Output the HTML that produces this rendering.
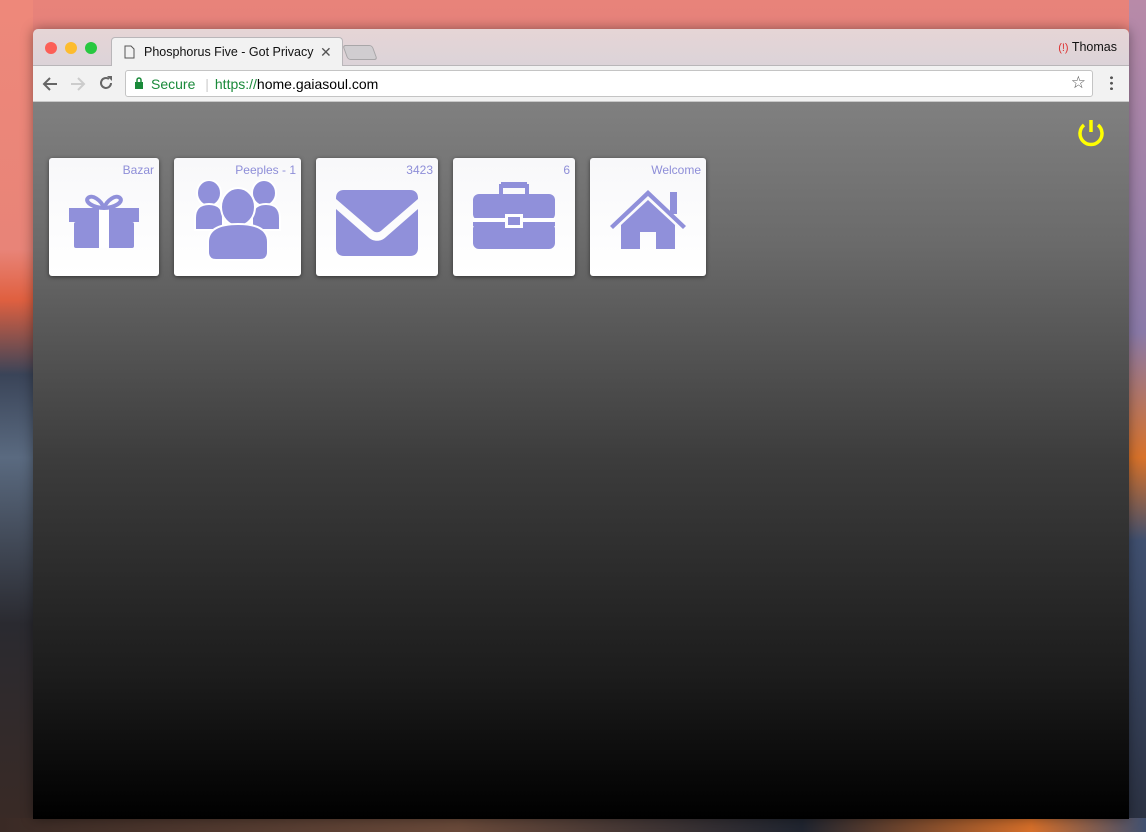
<!DOCTYPE html>
<html><head><style>
*{margin:0;padding:0;box-sizing:border-box}
body{width:1146px;height:832px;overflow:hidden;position:relative;font-family:"Liberation Sans",sans-serif;
background:linear-gradient(180deg,#e8837a 0%,#d97a80 25%,#b0506a 35%,#3a3f55 55%,#2a2a35 80%,#3a2a28 100%);}
.deskr{position:absolute;right:0;top:0;width:17px;height:832px;background:linear-gradient(180deg,#b88aa8 0%,#8a7aa8 40%,#d8722a 55%,#405070 65%,#2a3040 100%)}
.deskl{position:absolute;left:0;top:0;width:33px;height:832px;background:linear-gradient(180deg,#ee887a 0%,#e88478 30%,#e06040 36%,#3a4458 45%,#5a6a80 55%,#2a2a30 75%,#3a2a25 100%)}
.deskb{position:absolute;left:0;bottom:0;width:1146px;height:14px;background:linear-gradient(90deg,#3a2a25,#6a4a3a 40%,#202530 70%,#d8702a 90%,#405070)}
.win{position:absolute;left:33px;top:29px;width:1096px;height:790px;border-radius:5px 5px 0 0;overflow:hidden;box-shadow:0 0 12px rgba(0,0,0,.4)}
.tabbar{height:37px;background:linear-gradient(180deg,#e6d5d6,#dcd3d8);position:relative;border-bottom:1px solid #b9b6b9}
.dot{position:absolute;top:13px;width:12px;height:12px;border-radius:50%}
.tab{position:absolute;left:78px;top:8px;width:232px;height:30px;background:#f2f2f2;border:1px solid #b9b6b9;border-bottom:none;border-radius:4px 4px 0 0;transform:perspective(0) ;font-size:12.5px;color:#111;padding:7px 0 0 32px}
.toolbar{height:36px;background:#f2f2f2;position:relative;border-bottom:1px solid #c8c8c8}
.omni{position:absolute;left:92px;top:4px;width:968px;height:27px;background:#fff;border:1px solid #c4c4c4;border-radius:3px;font-size:14px;padding:5px 0 0 25px}
.content{height:717px;background:linear-gradient(180deg,#808080 0%,#6a6a6a 20%,#3c3c3c 50%,#1c1c1c 80%,#000 100%);position:relative}
.tile{position:absolute;top:56px;height:118px;background:linear-gradient(180deg,#f8f8fa,#fff);border-radius:3px;box-shadow:0 1px 4px rgba(0,0,0,.5)}
.tile span{position:absolute;right:5px;top:5px;font-size:12px;color:#8e8ed8}
.tile svg{position:absolute}
</style></head><body>
<div class="deskl"></div><div class="deskr"></div><div class="deskb"></div>
<div class="win">
 <div class="tabbar">
  <div class="dot" style="left:12px;background:#fc5f57"></div>
  <div class="dot" style="left:32px;background:#fdbc2e"></div>
  <div class="dot" style="left:52px;background:#28c840"></div>
  <div class="tab">Phosphorus Five - Got Privacy<span style="position:absolute;left:208px;top:6px;font-size:14px;color:#555">✕</span>
   <svg style="position:absolute;left:12px;top:7px" width="11" height="14"><path d="M1 1h6l3 3v9H1z" fill="none" stroke="#555"/></svg></div>
  <div style="position:absolute;left:312px;top:16px;width:30px;height:15px;background:#d0cdd0;border:1px solid #a8a6a8;border-radius:3px;transform:skewX(20deg)"></div>
  <div style="position:absolute;right:12px;top:11px;font-size:12.5px;color:#111"><span style="color:#d33;font-size:11px">(!)</span> Thomas</div>
 </div>
 <div class="toolbar">
  <svg style="position:absolute;left:9px;top:10px" width="16" height="16"><path d="M15 8H2M8 2L2 8l6 6" fill="none" stroke="#666" stroke-width="2"/></svg>
  <svg style="position:absolute;left:37px;top:10px" width="16" height="16"><path d="M1 8h13M8 2l6 6-6 6" fill="none" stroke="#ccc" stroke-width="2"/></svg>
  <svg style="position:absolute;left:65px;top:9px" width="16" height="16"><path d="M13 8a5 5 0 1 1-2-4" fill="none" stroke="#666" stroke-width="2"/><path d="M9 1h5v5z" fill="#666"/></svg>
  <div class="omni"><svg style="position:absolute;left:8px;top:6px" width="10" height="12"><rect x="1" y="5" width="8" height="7" fill="#1a8a3a"/><path d="M3 5V3a2 2 0 0 1 4 0v2" fill="none" stroke="#1a8a3a" stroke-width="1.5"/></svg><span style="color:#1a8a3a">Secure</span><span style="color:#ccc;margin:0 6px"> |</span><span style="color:#1a8a3a">https://</span>home.gaiasoul.com
   <span style="position:absolute;right:6px;top:2px;font-size:17px;color:#555">☆</span></div>
  <div style="position:absolute;right:16px;top:9px;width:3px;height:15px;background:radial-gradient(circle,#555 1.3px,transparent 1.6px) 0 0/3px 5.5px"></div>
 </div>
 <div class="content">
  <svg style="position:absolute;left:1042px;top:15px" width="32" height="32"><path d="M9 8a11 11 0 1 0 14 0" fill="none" stroke="#ffff00" stroke-width="3.5"/><path d="M16 3v12" stroke="#ffff00" stroke-width="3.5"/></svg>
  <div class="tile" style="left:16px;width:110px"><span>Bazar</span>
   <svg style="left:20px;top:30px" width="70" height="62" viewBox="0 0 70 62"><g fill="#9090da"><rect x="0" y="20" width="70" height="14"/><rect x="5" y="34" width="60" height="26" rx="2"/><rect x="30" y="20" width="10" height="40" fill="#fff"/><rect x="31" y="20" width="8" height="36" fill="#fff"/></g><path d="M35 20c-3-8-12-14-16-10s6 10 16 10c10 0 20-6 16-10s-13 2-16 10" fill="none" stroke="#9090da" stroke-width="4"/></svg></div>
  <div class="tile" style="left:141px;width:127px"><span>Peeples - 1</span>
   <svg style="left:20px;top:22px" width="88" height="82" viewBox="0 0 88 82"><g fill="#9090da" stroke="#fff" stroke-width="2"><ellipse cx="15" cy="13" rx="12" ry="13"/><ellipse cx="70" cy="13" rx="12" ry="13"/><path d="M1 38c0-10 6-14 14-14s14 4 14 14v12H1z"/><path d="M58 38c0-10 6-14 14-14s14 4 14 14v12H58z"/><ellipse cx="44" cy="27" rx="17" ry="19"/><path d="M14 62c0-12 10-18 30-18s30 6 30 18v10c0 5-3 8-8 8H22c-5 0-8-3-8-8z"/></g></svg></div>
  <div class="tile" style="left:283px;width:122px"><span>3423</span>
   <svg style="left:20px;top:32px" width="82" height="66" viewBox="0 0 82 66"><path d="M0 8c0-5 3-8 8-8h66c5 0 8 3 8 8v1L46 40c-3 3-7 3-10 0L0 9z M0 19l32 28c5 5 13 5 18 0l32-28v39c0 5-3 8-8 8H8c-5 0-8-3-8-8z" fill="#9090da"/></svg></div>
  <div class="tile" style="left:420px;width:122px"><span>6</span>
   <svg style="left:20px;top:22px" width="82" height="70" viewBox="0 0 82 70"><g fill="#9090da"><path d="M26 4h30v12h-4V8H30v8h-4z M28 2h26v4H28z"/><rect x="0" y="14" width="82" height="26" rx="6"/><rect x="0" y="43" width="82" height="26" rx="6"/><rect x="0" y="38" width="82" height="8"/></g><rect x="0" y="38" width="82" height="4" fill="#fff"/><rect x="32" y="34" width="18" height="14" fill="#fff"/><rect x="35" y="37" width="12" height="8" fill="#9090da"/></svg></div>
  <div class="tile" style="left:557px;width:116px"><span>Welcome</span>
   <svg style="left:20px;top:32px" width="76" height="60" viewBox="0 0 76 60"><g fill="#9090da"><path d="M38 0L76 36l-3 3L38 6 3 39 0 36z"/><rect x="60" y="2" width="7" height="22"/><path d="M11 35L38 10l27 25v24H46V42H30v17H11z"/></g></svg></div>
 </div>
</div>
</body></html>
